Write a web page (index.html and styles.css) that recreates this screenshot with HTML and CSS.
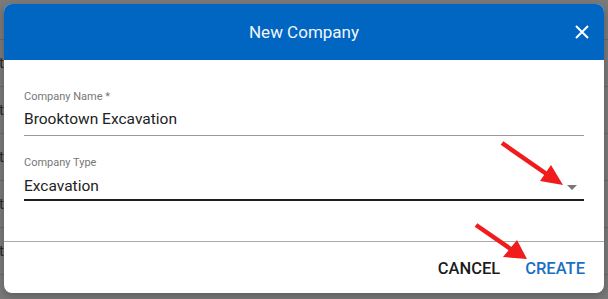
FILE: index.html
```html
<!DOCTYPE html>
<html lang="en">
<head>
    <meta charset="UTF-8">
    <meta name="viewport" content="width=device-width, initial-scale=1.0">
    <title>New Company</title>
    <link rel="stylesheet" href="styles.css">
</head>
<body>
    <!-- page behind the modal -->
    <div class="backdrop">
        <div class="row first"></div>
        <div class="row"><span>t</span></div>
        <div class="row"><span>t</span></div>
        <div class="row"><span>t</span></div>
        <div class="row"><span>t</span></div>
        <div class="row"><span>t</span></div>
    </div>

    <div class="dialog">
        <div class="dialog-header">
            <h1>New Company</h1>
            <button class="close" aria-label="Close">
                <svg width="14" height="14" viewBox="0 0 14 14">
                    <path d="M1 1 L13 13 M13 1 L1 13" stroke="#fff" stroke-width="2" fill="none"/>
                </svg>
            </button>
        </div>

        <div class="dialog-body">
            <div class="field">
                <label>Company Name *</label>
                <div class="value">Brooktown Excavation</div>
            </div>
            <div class="field select">
                <label>Company Type</label>
                <div class="value">Excavation<span class="caret"></span></div>
            </div>
        </div>

        <div class="dialog-footer">
            <button class="btn">CANCEL</button>
            <button class="btn primary">CREATE</button>
        </div>
    </div>

    <!-- annotation arrows -->
    <svg class="arrows" width="608" height="299" viewBox="0 0 608 299">
        <line x1="502" y1="143" x2="548" y2="175" stroke="#f01c1c" stroke-width="4.5"/>
        <polygon points="540,181 551,165 563,185" fill="#f01c1c"/>
        <line x1="476" y1="225" x2="512" y2="250" stroke="#f01c1c" stroke-width="4.5"/>
        <polygon points="503,257 517,240 527,259" fill="#f01c1c"/>
    </svg>
</body>
</html>
```

FILE: styles.css
```css
body {
    margin: 0;
    width: 608px;
    height: 299px;
    overflow: hidden;
    background-color: #7a7a7a;
    font-family: Roboto, "Liberation Sans", sans-serif;
    position: relative;
}

.backdrop .row {
    height: 46px;
    border-bottom: 1px solid #6b6b6b;
    display: flex;
    align-items: center;
    font-size: 15px;
    color: #2b2b2b;
}

.backdrop .row.first {
    height: 39px;
}

.backdrop .row span {
    margin-left: -1px;
}

.dialog {
    position: absolute;
    left: 4px;
    top: 4px;
    width: 600px;
    height: 289px;
    background: #fff;
    border-radius: 8px;
    overflow: hidden;
    display: flex;
    flex-direction: column;
    box-shadow: 0 3px 10px rgba(0, 0, 0, 0.25);
}

.dialog-header {
    height: 56px;
    flex: none;
    background-color: #0066c2;
    display: flex;
    align-items: center;
    justify-content: center;
    position: relative;
}

.dialog-header h1 {
    margin: 0;
    font-size: 17px;
    font-weight: 400;
    color: #f2f6fc;
}

.close {
    position: absolute;
    right: 15px;
    top: 21px;
    width: 14px;
    height: 14px;
    padding: 0;
    border: none;
    background: none;
    display: flex;
}

.dialog-body {
    flex: 1;
    padding: 30px 20px 0;
    border-bottom: 1px solid #a8a8a8;
}

.field label {
    display: block;
    font-size: 11px;
    line-height: 14px;
    color: #777;
}

.field .value {
    margin-top: 5px;
    font-size: 15.5px;
    line-height: 20px;
    color: #222;
    padding-bottom: 6px;
    border-bottom: 1px solid #999;
    display: flex;
    align-items: center;
}

.field.select {
    margin-top: 20px;
}

.field.select .value {
    margin-top: 6px;
    padding-bottom: 3px;
    border-bottom: 2px solid #1e1e1e;
}

.caret {
    margin-left: auto;
    margin-right: 7px;
    margin-top: 3px;
    width: 0;
    height: 0;
    border-left: 5px solid transparent;
    border-right: 5px solid transparent;
    border-top: 5px solid #777;
}

.dialog-footer {
    height: 51px;
    flex: none;
    display: flex;
    align-items: center;
    justify-content: flex-end;
    gap: 25px;
    padding-right: 19px;
}

.btn {
    border: none;
    background: none;
    padding: 0;
    font-family: Roboto, "Liberation Sans", sans-serif;
    font-size: 16.5px;
    font-weight: 500;
    color: #1c1c1c;
    margin-top: 1px;
}

.btn.primary {
    color: #1a6fc4;
}

.arrows {
    position: absolute;
    left: 0;
    top: 0;
    pointer-events: none;
}
```
